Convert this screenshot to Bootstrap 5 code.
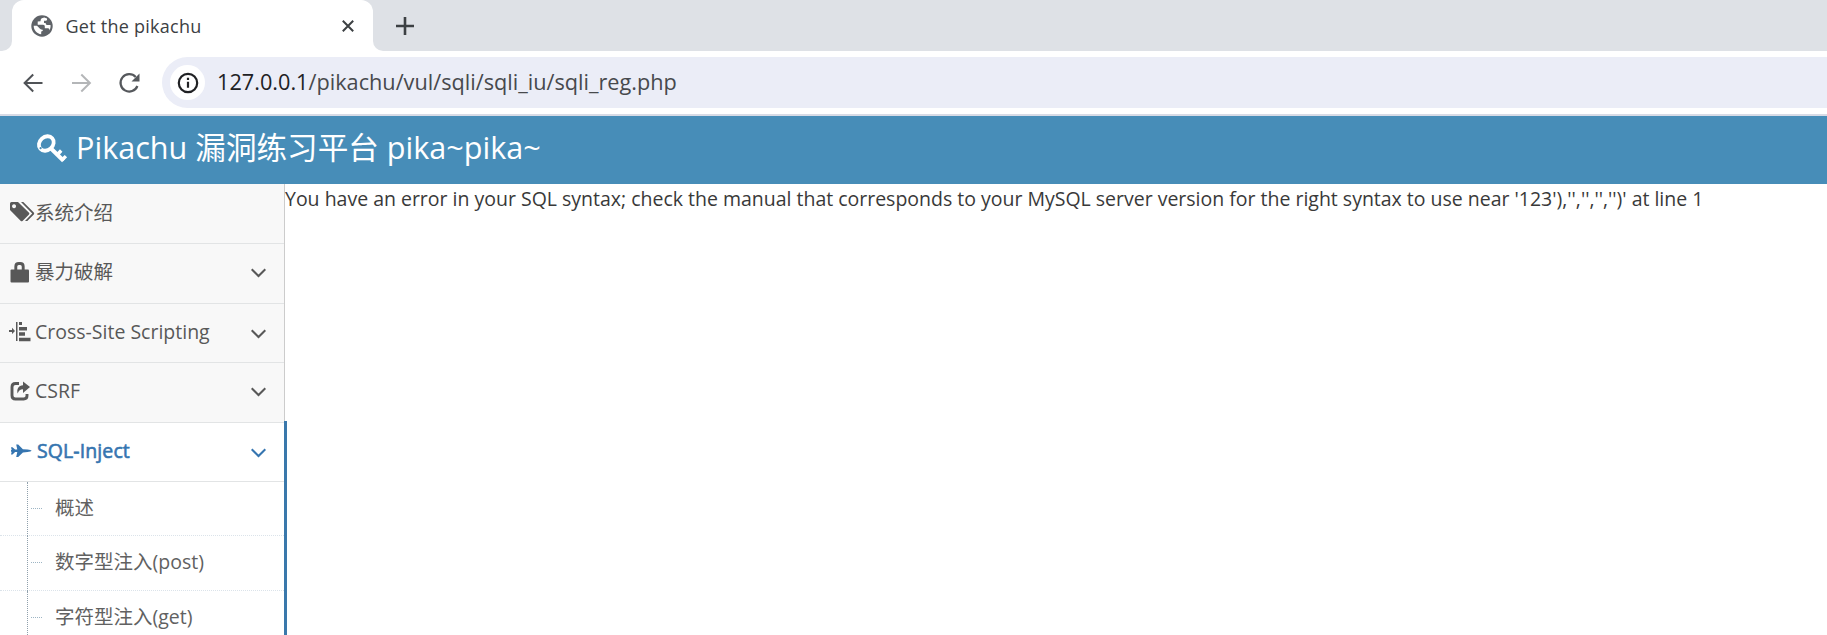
<!DOCTYPE html>
<html lang="zh">
<head>
<meta charset="utf-8">
<title>Get the pikachu</title>
<link rel="stylesheet" href="https://cdn.jsdelivr.net/npm/bootstrap@5.3.0/dist/css/bootstrap.min.css">
<style>
body{font-family:"Open Sans","Noto Sans CJK SC",sans-serif;font-size:19.5px;line-height:30px;color:#393939;background:#fff;height:635px;overflow:hidden}
svg{display:block;flex:none}
.tabstrip{height:51px;background:#dee1e6}
.tab-prev{width:12px;background:#fff}
.tab-prev i{display:block;height:51px;background:#dee1e6;border-bottom-right-radius:10px}
.tab-on{width:361px;background:#fff;border-radius:12px 12px 0 0;padding-left:19px;padding-right:19px}
.tab-title{font-size:18px;margin-left:12.5px;letter-spacing:.25px;color:#3c4043}
.tab-rest{background:#fff}
.tab-rest>div{background:#dee1e6;border-bottom-left-radius:10px;height:51px;padding-left:23px}
.toolbar{height:65px;border-bottom:2px solid #d8dbe6;padding:6px 0 6px 23px}
.reload{margin-left:26px}
.fwd{margin-left:29px}
.omni{height:51px;background:#ebedf7;border-radius:26px 0 0 26px;padding-left:8px;margin-left:21px}
.site-info{width:35px;height:35px;background:#fff;border-radius:50%}
.url{font-size:21.7px;margin-left:12px;margin-bottom:2px;color:#47494d;white-space:nowrap}
.url b{font-weight:400;color:#202124}
.topbar{height:68px;background:#478db8;color:#fff;padding:0 0 3px 36px}
.brand{font-size:30.6px;margin-left:8px;margin-bottom:3px;white-space:nowrap}
.side{width:285px;background:#f8f8f8;border-right:1px solid #ccc;height:451px}
.item{height:60px;border-bottom:1px solid #e2e4e5;color:#585858;padding:0 18px 2px 9px}
.item.short{height:59px}
.item .lbl{margin-left:4px;white-space:nowrap}
.item .up{margin-bottom:2px}
.item.on{background:#fff;color:#3575b0;height:59px}
.item.on .lbl{-webkit-text-stroke:.6px #3575b0;letter-spacing:.1px;margin-left:5px}
.group-on{width:287px;border-right:3px solid #3a78ab;margin-top:-2px;padding-top:2px;background:linear-gradient(#f8f8f8 1px,#e2e4e5 1px,#e2e4e5 2px,#fff 2px)}
.sub{position:relative;height:54px;border-bottom:1px dotted #dbe3ea;padding:0 0 2px 55px;color:#616161}
.sub.tall{height:55px;padding-bottom:3px}
.tree{border-left:1px dotted #8fa0ac;position:absolute;left:27px;top:0;bottom:-1px;width:15px}
.tree:after{content:"";position:absolute;left:3px;width:11px;top:26px;border-top:1px dotted #9db5c4}
main{white-space:nowrap;letter-spacing:-.008px}
</style>
</head>
<body>
<div class="tabstrip d-flex">
  <div class="tab-prev"><i></i></div>
  <div class="tab-on d-flex align-items-center">
    <svg width="22" height="22" viewBox="0 0 22 22"><circle cx="11" cy="11" r="10.700" fill="#5f6368"/><path d="M13.300 2.500L10.800 3.300C9.500 4 9.700 5.600 9.500 6.300L6.700 6.500v3.300h5.400c1.200 0 1.700.7 1.700 1.800v1.700h3.200c1.300 0 1.500 1 1.300 2.100 1-1.300 1.500-3.200 1.200-5.400h-3.200c-1.300 0-1.600-.8-1.600-2h-1.700V5.700h1.700c1.300 0 1.500-1 1.300-2.300zM2.700 10.700c0 4.500 3.200 8 7.500 8.500v-2.800c1.200 0 1.700-.6 1.700-1.600-1 0-2-.2-2.900-1L6 10.700z" fill="#fff"/></svg>
    <span class="tab-title me-auto">Get the pikachu</span>
    <svg width="12" height="12" viewBox="0 0 12 12" stroke="#3c4043" stroke-width="2"><path d="M.8.8l10.400 10.400M11.200.8L.8 11.200"/></svg>
  </div>
  <div class="tab-rest flex-grow-1"><div class="d-flex align-items-center">
    <svg width="18" height="18" viewBox="0 0 18 18" stroke="#3c4043" stroke-width="2.600"><path d="M9 0v18M0 9h18"/></svg>
  </div></div>
</div>
<div class="toolbar d-flex align-items-center">
  <svg width="20" height="20" viewBox="0 0 20 20" fill="none" stroke="#505357" stroke-width="2"><path d="M19.500 10H2M10.200 1.500L1.600 10l8.600 8.500"/></svg>
  <svg class="fwd" width="20" height="20" viewBox="0 0 20 20" fill="none" stroke="#b4b6b8" stroke-width="2"><path d="M0 10h17.500M9.300 1.500l8.600 8.500-8.600 8.500"/></svg>
  <svg class="reload" width="23" height="22" viewBox="0 0 23 22" fill="none" stroke="#55585c" stroke-width="2.200"><path d="M19.400 14A8.700 8.700 0 1 1 17.700 5"/><path d="M21.500 1.500v8h-8z" fill="#55585c" stroke="none"/></svg>
  <div class="omni flex-grow-1 d-flex align-items-center">
    <span class="site-info d-flex align-items-center justify-content-center"><svg width="22" height="22" viewBox="0 0 22 22"><circle cx="11" cy="11" r="9.200" fill="none" stroke="#202124" stroke-width="2.200"/><path d="M11 9.800v6M11 5.800v2.200" stroke="#202124" stroke-width="2.200"/></svg></span>
    <span class="url"><b>127.0.0.1</b>/pikachu/vul/sqli/sqli_iu/sqli_reg.php</span>
  </div>
</div>
<header class="topbar d-flex align-items-center">
  <svg width="32" height="30" viewBox="0 0 32 30" fill="none" stroke="#fff"><ellipse cx="10.300" cy="9.500" rx="8" ry="6.600" transform="rotate(-42 10.300 9.500)" stroke-width="3.800"/><circle cx="4.600" cy="14.200" r="1.100" fill="#478db8" stroke="none"/><path d="M15 14.500l12.500 12.300" stroke-width="4"/><path d="M26 26l3.900-3.900M21.500 20.500l3.700-4" stroke-width="3.400"/></svg>
  <span class="brand">Pikachu 漏洞练习平台 pika~pika~</span>
</header>
<div class="d-flex">
  <nav class="side flex-shrink-0">
    <div class="item d-flex align-items-center">
      <svg class="up" width="26" height="22" viewBox="0 0 26 22" fill="#585858"><path fill-rule="evenodd" d="M1 2.500Q1 1 2.500 1H9L20 11.800Q20.800 12.600 20 13.500L13.500 20Q12.600 20.700 11.800 20L1 9zM5 3.200a2 2 0 1 0 .1 0z"/><path d="M12 1h2.300l10.500 10.600q.9 1 0 1.900L18.300 20H16l7.200-7.500z"/></svg>
      <span class="lbl ms-0">系统介绍</span>
    </div>
    <div class="item d-flex align-items-center">
      <svg class="up" width="22" height="22" viewBox="0 0 22 22"><path d="M6.800 11V5.500q0-3 3-3h1.400q3 0 3 3V11" fill="none" stroke="#585858" stroke-width="2.900"/><rect x="1.500" y="8.500" width="18.500" height="13" rx="1" fill="#585858"/></svg>
      <span class="lbl up">暴力破解</span>
      <svg class="ms-auto" width="15" height="10" viewBox="0 0 15 10" fill="none" stroke="#585858" stroke-width="2"><path d="M.7 1.200l6.800 6.800 6.800-6.800"/></svg>
    </div>
    <div class="item short d-flex align-items-center">
      <svg width="22" height="22" viewBox="0 0 22 22" fill="#585858"><path d="M0 9h3V6.800L6 10l-3 3v-2H0zM7 1h1.500v19H7zM10 1h3v3h-3zM10 6h8v3.500h-8zM10 11.300h6v3.500h-6zM10 16.700h11.500v3.500H10z"/></svg>
      <span class="lbl">Cross-Site Scripting</span>
      <svg class="ms-auto mt-1" width="15" height="10" viewBox="0 0 15 10" fill="none" stroke="#585858" stroke-width="2"><path d="M.7 1.200l6.800 6.800 6.800-6.800"/></svg>
    </div>
    <div class="item d-flex align-items-center">
      <svg class="up" width="22" height="22" viewBox="0 0 22 22"><path d="M10 3.500H6.500Q3 3.500 3 7v8.500Q3 19 6.500 19h8.200q3.300 0 3.300-3.200V14" fill="none" stroke="#585858" stroke-width="2.900"/><path d="M14 1.500l7 5.500-7 6V9.300c-3 0-4 1.200-5.400 4.200C7.500 9 9.600 5.500 14 5.300z" fill="#585858"/></svg>
      <span class="lbl up">CSRF</span>
      <svg class="ms-auto" width="15" height="10" viewBox="0 0 15 10" fill="none" stroke="#585858" stroke-width="2"><path d="M.7 1.200l6.800 6.800 6.800-6.800"/></svg>
    </div>
    <div class="group-on">
      <div class="item on d-flex align-items-center">
        <svg width="23" height="16" viewBox="0 0 23 16" fill="#3575b0"><path d="M2 4.200h1.500l2.600 2.400h2.200L7.200 1.500h2l4.700 4.700 4.700.4q3.300.4 4.100 1.200-.8.800-4.100 1.200l-4.700.4-4.700 4.700h-2L8.300 9H6.100l-2.600 2.400H2l.7-2.700H2V6.900h.7z"/></svg>
        <span class="lbl">SQL-Inject</span>
        <svg class="ms-auto mt-1" width="15" height="10" viewBox="0 0 15 10" fill="none" stroke="#3575b0" stroke-width="2"><path d="M.7 1.200l6.800 6.800 6.800-6.800"/></svg>
      </div>
      <div class="sub d-flex align-items-center"><i class="tree"></i><span>概述</span></div>
      <div class="sub tall d-flex align-items-center"><i class="tree"></i><span>数字型注入(post)</span></div>
      <div class="sub d-flex align-items-center"><i class="tree"></i><span>字符型注入(get)</span></div>
    </div>
  </nav>
  <main class="flex-grow-1">You have an error in your SQL syntax; check the manual that corresponds to your MySQL server version for the right syntax to use near '123'),'','','','')' at line 1</main>
</div>
<script src="https://cdn.jsdelivr.net/npm/bootstrap@5.3.0/dist/js/bootstrap.bundle.min.js"></script>
</body>
</html>
